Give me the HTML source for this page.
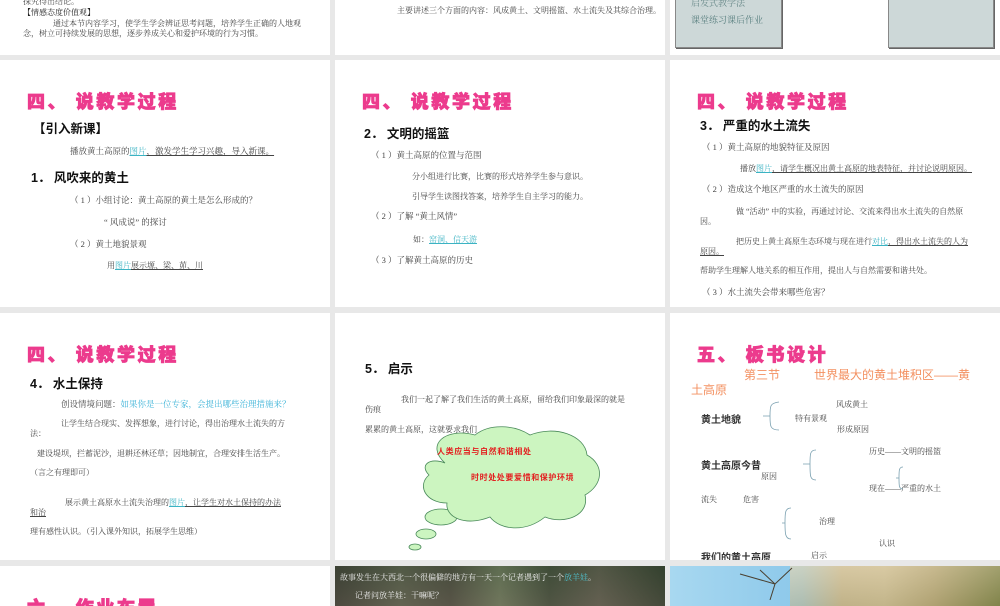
<!DOCTYPE html>
<html><head><meta charset="utf-8">
<style>
*{margin:0;padding:0;box-sizing:border-box}
body{width:1000px;height:600px;background:#e8e8e8;position:relative;overflow:hidden;font-family:"Liberation Serif","Noto Serif CJK SC","Noto Sans CJK SC",serif;color:#333}
.s{position:absolute;background:#fff;overflow:hidden}
.a{position:absolute;white-space:nowrap}
.t{font-family:"Liberation Sans","Noto Sans CJK SC",sans-serif;font-weight:900;color:#ec3b8d;font-size:18px;letter-spacing:2.6px;-webkit-text-stroke:0.8px #ec3b8d}
.h{font-family:"Liberation Sans","Noto Sans CJK SC",sans-serif;font-weight:bold;color:#111;font-size:12.5px}
.p{font-size:8px;color:#444}
.q{font-size:8.5px;color:#444}
.u{text-decoration:underline}
.l{color:#3bb3c3;text-decoration:underline}
.box{position:absolute;background:#cdd8d8;border:1px solid #888;box-shadow:1px 1px 0 #666}
</style></head><body>

<!-- row1 -->
<div class="s" style="left:0;top:0;width:330px;height:55px">
<div class="a p" style="left:23px;top:-4px">探究得出结论。</div>
<div class="a p" style="left:23px;top:7px;color:#222">【情感态度价值观】</div>
<div class="a p" style="left:53px;top:18px">通过本节内容学习，使学生学会辨证思考问题，培养学生正确的人地观</div>
<div class="a p" style="left:23px;top:28px">念，树立可持续发展的思想，逐步养成关心和爱护环境的行为习惯。</div>
</div>
<div class="s" style="left:335px;top:0;width:330px;height:55px">
<div class="a p" style="left:62px;top:5px">主要讲述三个方面的内容：风成黄土、文明摇篮、水土流失及其综合治理。</div>
</div>
<div class="s" style="left:670px;top:0;width:330px;height:55px">
<div class="box" style="left:5px;top:-5px;width:107px;height:53px"><div class="a" style="left:15px;top:0;font-size:9px;color:#6a8a8a">启发式教学法</div><div class="a" style="left:15px;top:17px;font-size:9px;color:#5a8080">课堂练习课后作业</div></div>
<div class="box" style="left:218px;top:-5px;width:106px;height:53px"></div>
</div>

<!-- row2 -->
<div class="s" style="left:0;top:60px;width:330px;height:247px">
<div class="a t" style="left:27px;top:28px">四、 说教学过程</div>
<div class="a h" style="left:33px;top:58px">【引入新课】</div>
<div class="a q" style="left:70px;top:85px">播放黄土高原的<span class="l">图片</span><span class="u">，激发学生学习兴趣，导入新课。</span></div>
<div class="a h" style="left:31px;top:107px">1． 风吹来的黄土</div>
<div class="a q" style="left:70px;top:134px">（ 1 ）小组讨论：黄土高原的黄土是怎么形成的？</div>
<div class="a q" style="left:104px;top:156px">“ 风成说” 的探讨</div>
<div class="a q" style="left:70px;top:178px">（ 2 ）黄土地貌景观</div>
<div class="a p" style="left:107px;top:200px">用<span class="l">图片</span><span class="u">展示塬、梁、茆、川</span></div>
</div>
<div class="s" style="left:335px;top:60px;width:330px;height:247px">
<div class="a t" style="left:27px;top:28px">四、 说教学过程</div>
<div class="a h" style="left:29px;top:63px">2． 文明的摇篮</div>
<div class="a q" style="left:36px;top:89px">（ 1 ）黄土高原的位置与范围</div>
<div class="a p" style="left:77px;top:111px">分小组进行比赛，比赛的形式培养学生参与意识。</div>
<div class="a p" style="left:77px;top:131px">引导学生读图找答案，培养学生自主学习的能力。</div>
<div class="a q" style="left:36px;top:150px">（ 2 ）了解 “黄土风情”</div>
<div class="a p" style="left:78px;top:174px">如：<span class="l">窑洞、信天游</span></div>
<div class="a q" style="left:36px;top:194px">（ 3 ）了解黄土高原的历史</div>
</div>
<div class="s" style="left:670px;top:60px;width:330px;height:247px">
<div class="a t" style="left:27px;top:28px">四、 说教学过程</div>
<div class="a h" style="left:30px;top:55px">3． 严重的水土流失</div>
<div class="a q" style="left:32px;top:81px">（ 1 ）黄土高原的地貌特征及原因</div>
<div class="a p" style="left:70px;top:103px">播放<span class="l">图片</span><span class="u">，请学生概况出黄土高原的地表特征，并讨论说明原因。</span></div>
<div class="a q" style="left:32px;top:123px">（ 2 ）造成这个地区严重的水土流失的原因</div>
<div class="a p" style="left:66px;top:146px">做 “活动” 中的实验，再通过讨论、交流来得出水土流失的自然原</div>
<div class="a p" style="left:30px;top:156px">因。</div>
<div class="a p" style="left:66px;top:176px">把历史上黄土高原生态环境与现在进行<span class="l">对比</span><span class="u">，得出水土流失的人为</span></div>
<div class="a p u" style="left:30px;top:186px">原因。</div>
<div class="a p" style="left:30px;top:205px">帮助学生理解人地关系的相互作用，提出人与自然需要和谐共处。</div>
<div class="a q" style="left:32px;top:226px">（ 3 ）水土流失会带来哪些危害？</div>
</div>

<!-- row3 -->
<div class="s" style="left:0;top:313px;width:330px;height:247px">
<div class="a t" style="left:27px;top:28px">四、 说教学过程</div>
<div class="a h" style="left:30px;top:60px">4． 水土保持</div>
<div class="a q" style="left:61px;top:85px">创设情境问题：<span style="color:#3bb3d8">如果你是一位专家，会提出哪些治理措施来？</span></div>
<div class="a p" style="left:61px;top:105px">让学生结合现实、发挥想象，进行讨论，得出治理水土流失的方</div>
<div class="a p" style="left:30px;top:115px">法：</div>
<div class="a p" style="left:37px;top:135px">建设堤坝，拦蓄泥沙，退耕还林还草；因地制宜，合理安排生活生产。</div>
<div class="a p" style="left:30px;top:154px">（言之有理即可）</div>
<div class="a p" style="left:65px;top:184px">展示黄土高原水土流失治理的<span class="l">图片</span><span class="u">，让学生对水土保持的办法</span></div>
<div class="a p u" style="left:30px;top:194px">和治</div>
<div class="a p" style="left:30px;top:213px">理有感性认识。（引入课外知识，拓展学生思维）</div>
</div>
<div class="s" style="left:335px;top:313px;width:330px;height:247px">
<div class="a h" style="left:30px;top:45px">5． 启示</div>
<div class="a p" style="left:66px;top:81px">我们一起了解了我们生活的黄土高原，留给我们印象最深的就是</div>
<div class="a p" style="left:30px;top:91px">伤痕</div>
<div class="a p" style="left:30px;top:111px">累累的黄土高原，这就要求我们</div>
<svg class="a" style="left:70px;top:112px" width="200" height="135" viewBox="0 0 200 135">
<g fill="#ccf5c0" stroke="#4a8a5a" stroke-width="0.8">
<ellipse cx="10" cy="122" rx="6" ry="3"/>
<ellipse cx="21" cy="109" rx="10" ry="5"/>
<ellipse cx="36" cy="92" rx="16" ry="8"/>
<path d="M40 38 C20 20 40 2 70 10 C85 -2 110 0 125 10 C150 0 180 10 182 30 C200 40 198 60 180 70 C185 90 160 100 140 92 C120 108 95 105 85 92 C60 102 40 92 42 78 C20 78 12 60 24 50 C14 40 25 32 40 38 Z"/>
</g>
<text x="32" y="29" font-family="Liberation Sans,Noto Sans CJK SC,sans-serif" font-weight="bold" font-size="8" fill="#e32020" letter-spacing="0.6">人类应当与自然和谐相处</text>
<text x="66" y="55" font-family="Liberation Sans,Noto Sans CJK SC,sans-serif" font-weight="bold" font-size="8" fill="#e32020" letter-spacing="0.6">时时处处要爱惜和保护环境</text>
</svg>
</div>
<div class="s" style="left:670px;top:313px;width:330px;height:247px">
<div class="a t" style="left:27px;top:28px">五、 板书设计</div>
<div class="a" style="left:74px;top:53px;font-size:12px;color:#f39060;font-family:'Liberation Sans','Noto Sans CJK SC',sans-serif">第三节</div>
<div class="a" style="left:144px;top:53px;font-size:12px;color:#f39060;font-family:'Liberation Sans','Noto Sans CJK SC',sans-serif">世界最大的黄土堆积区——黄</div>
<div class="a" style="left:21px;top:68px;font-size:12px;color:#f39060;font-family:'Liberation Sans','Noto Sans CJK SC',sans-serif">土高原</div>
<div class="a h" style="left:31px;top:98px;font-size:10px;color:#333">黄土地貌</div>
<div class="a h" style="left:31px;top:144px;font-size:10px;color:#333">黄土高原今昔</div>
<div class="a h" style="left:31px;top:236px;font-size:10px;color:#333">我们的黄土高原</div>
<div class="a p" style="left:166px;top:86px">风成黄土</div>
<div class="a p" style="left:125px;top:100px">特有景观</div>
<div class="a p" style="left:167px;top:111px">形成原因</div>
<div class="a p" style="left:199px;top:133px">历史——文明的摇篮</div>
<div class="a p" style="left:91px;top:158px">原因</div>
<div class="a p" style="left:199px;top:170px">现在——严重的水土</div>
<div class="a p" style="left:31px;top:181px">流失</div>
<div class="a p" style="left:73px;top:181px">危害</div>
<div class="a p" style="left:149px;top:203px">治理</div>
<div class="a p" style="left:209px;top:225px">认识</div>
<div class="a p" style="left:141px;top:237px">启示</div>
<svg class="a" style="left:0;top:0" width="330" height="247">
<g fill="none" stroke="#7aa0b0" stroke-width="0.8">
<path d="M100 103 L93 103 M100 103 C100 93 100 90 109 89 M100 103 C100 113 100 117 109 117"/>
<path d="M133 151 L140 151 M140 151 C140 141 140 137 146 137 M140 151 C140 163 140 167 146 167"/>
<path d="M226 165 L229 165 M229 165 C229 157 229 154 233 154 M229 165 C229 173 229 176 233 176"/>
<path d="M112 210 L115 210 M115 210 C115 200 115 195 121 195 M115 210 C115 220 115 226 121 226"/>
</g></svg>
</div>

<!-- row4 -->
<div class="s" style="left:0;top:566px;width:330px;height:40px">
<div class="a t" style="left:27px;top:28px">六、 作业布置</div>
</div>
<div class="s" style="left:335px;top:566px;width:330px;height:40px;background:linear-gradient(90deg,#3a3a34 0%,#5a5e4e 20%,#4b4a40 35%,#6d7a5e 50%,#3f4a3a 65%,#5c5a4e 80%,#2f3a2c 100%)">
<div style="position:absolute;inset:0;background:linear-gradient(180deg,rgba(60,80,50,.3),rgba(120,110,90,.3))"></div>
<div class="a p" style="left:5px;top:6px;color:#eee">故事发生在大西北一个很偏僻的地方有一天一个记者遇到了一个<span style="color:#4fc3d0">放羊娃</span>。</div>
<div class="a p" style="left:20px;top:24px;color:#eee">记者问放羊娃：干嘛呢？</div>
</div>
<div class="s" style="left:670px;top:566px;width:330px;height:40px;background:linear-gradient(90deg,#a8d8f0 0%,#8cc8ea 40%,#c8b890 52%,#d8c8a0 65%,#b8a878 80%,#6a7a3a 100%)">
<div style="position:absolute;left:120px;top:0;width:210px;height:40px;background:linear-gradient(170deg,rgba(230,215,180,.7),rgba(150,140,90,.5))"></div>
<svg class="a" style="left:60px;top:0" width="80" height="34"><g stroke="#4a4030" stroke-width="1" fill="none"><path d="M40 34 L45 18 L30 4 M45 18 L62 2 M45 18 L10 8"/></g></svg>
</div>
</body></html>
